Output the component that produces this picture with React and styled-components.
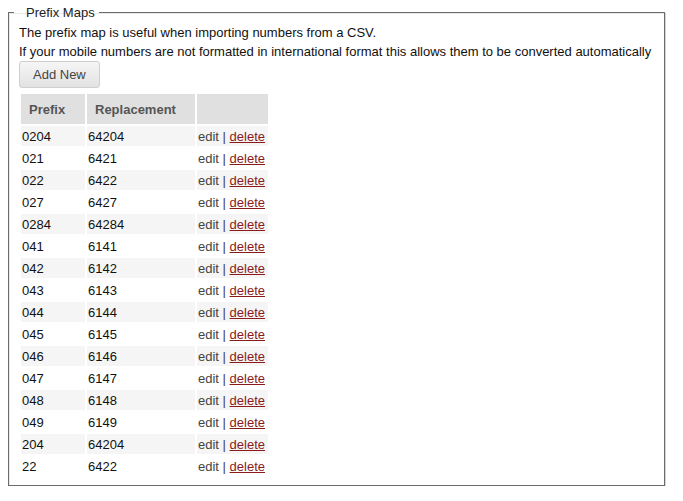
import React from "react";
import styled, { createGlobalStyle } from "styled-components";

const GlobalStyle = createGlobalStyle`
  html, body { margin: 0; padding: 0; background: #fff; }
  body { font-family: "Liberation Sans", Arial, Helvetica, sans-serif; font-size: 13px; color: #111; }
`;

const Page = styled.div`
  padding: 5px 0 0 8px;
`;

const Fieldset = styled.fieldset`
  box-sizing: border-box;
  width: 657px;
  margin: 0;
  padding: 3px 10px 7px 10px;
  border: 1px solid #6b6b6b;
  box-shadow: 1px 1px 0 #d4d4d4, inset 1px 1px 0 #e8e8e8;
  min-width: 0;
`;

const Legend = styled.legend`
  margin-left: -5px;
  padding: 0 4px 0 12px;
  font-size: 13px;
  line-height: 15px;
  color: #222;
`;

const Intro = styled.div`
  line-height: 19px;
  color: #111;
`;

const Button = styled.button`
  display: block;
  height: 27px;
  padding: 0 13px;
  font-family: inherit;
  font-size: 13px;
  color: #444;
  background: linear-gradient(#f6f6f6, #e2e2e2);
  border: 1px solid #cfcfcf;
  border-radius: 3px;
`;

const Table = styled.table`
  margin-top: 4px;
  border-collapse: separate;
  border-spacing: 2px;
`;

const Th = styled.th`
  height: 30px;
  box-sizing: border-box;
  padding: 0 8px;
  width: ${(p) => p.$w}px;
  background: #e0e0e0;
  color: #555;
  font-weight: bold;
  font-size: 13px;
  text-align: left;
`;

const Tr = styled.tr`
  background: ${(p) => (p.$odd ? "#f5f5f5" : "transparent")};
`;

const Td = styled.td`
  height: 20px;
  padding: 0 1px;
  box-sizing: border-box;
  font-size: 13px;
  color: #111;
  white-space: nowrap;
`;

const Edit = styled.span`
  color: #444;
`;

const Delete = styled.a`
  color: #8b1a1a;
  text-decoration: underline;
  cursor: pointer;
`;

const rows = [
  ["0204", "64204"],
  ["021", "6421"],
  ["022", "6422"],
  ["027", "6427"],
  ["0284", "64284"],
  ["041", "6141"],
  ["042", "6142"],
  ["043", "6143"],
  ["044", "6144"],
  ["045", "6145"],
  ["046", "6146"],
  ["047", "6147"],
  ["048", "6148"],
  ["049", "6149"],
  ["204", "64204"],
  ["22", "6422"],
];

export default function App() {
  return (
    <Page>
      <GlobalStyle />
      <Fieldset>
        <Legend>Prefix Maps</Legend>
        <Intro>The prefix map is useful when importing numbers from a CSV.</Intro>
        <Intro>
          If your mobile numbers are not formatted in international format this allows them to be converted automatically
        </Intro>
        <Button>Add New</Button>
        <Table>
          <thead>
            <tr>
              <Th $w={64}>Prefix</Th>
              <Th $w={108}>Replacement</Th>
              <Th $w={71}></Th>
            </tr>
          </thead>
          <tbody>
            {rows.map(([a, b], i) => (
              <Tr key={i} $odd={i % 2 === 0}>
                <Td>{a}</Td>
                <Td>{b}</Td>
                <Td>
                  <Edit>edit | </Edit>
                  <Delete>delete</Delete>
                </Td>
              </Tr>
            ))}
          </tbody>
        </Table>
      </Fieldset>
    </Page>
  );
}
